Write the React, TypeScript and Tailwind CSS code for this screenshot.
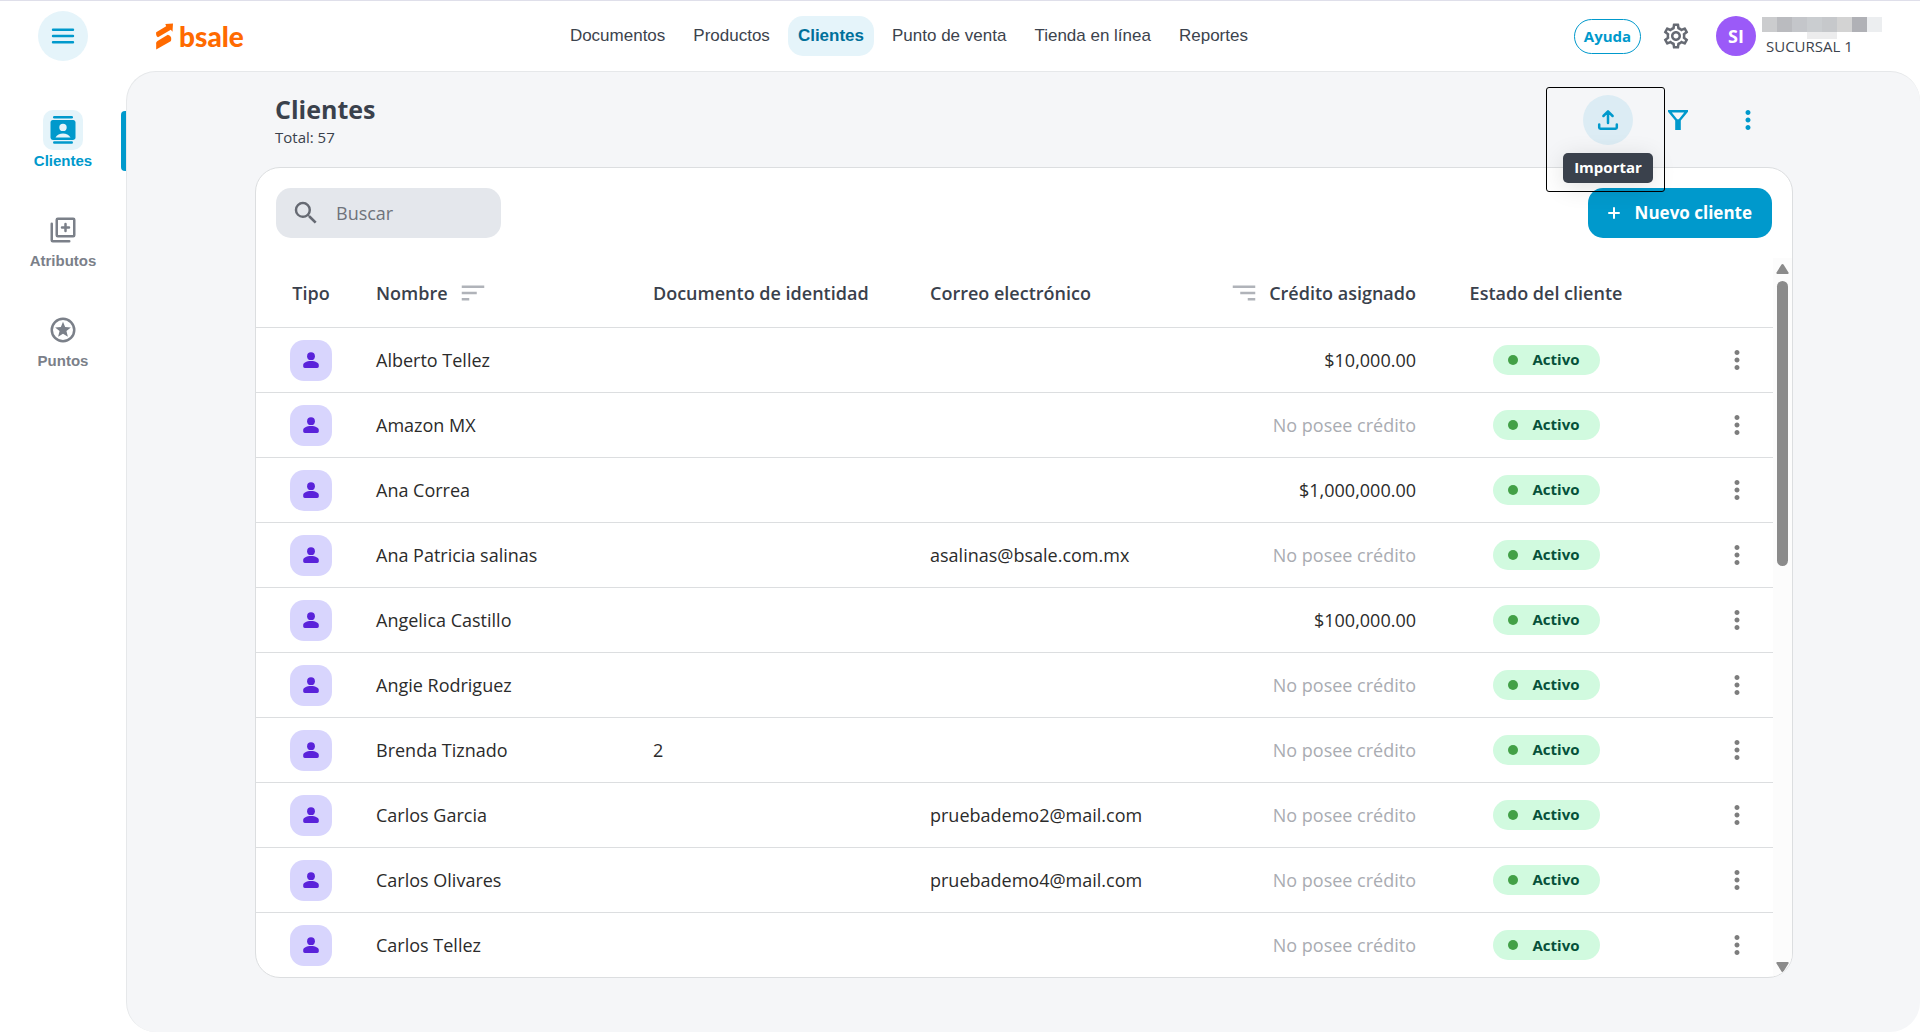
import React from 'react';
import { MdMoreVert, MdOutlineSettings, MdSearch, MdSort } from 'react-icons/md';

const navLinks = ['Documentos', 'Productos', 'Clientes', 'Punto de venta', 'Tienda en línea', 'Reportes'];

const clients = [
  { name: 'Alberto Tellez', document: '', email: '', credit: '$10,000.00' },
  { name: 'Amazon MX', document: '', email: '', credit: '' },
  { name: 'Ana Correa', document: '', email: '', credit: '$1,000,000.00' },
  { name: 'Ana Patricia salinas', document: '', email: 'asalinas@bsale.com.mx', credit: '' },
  { name: 'Angelica Castillo', document: '', email: '', credit: '$100,000.00' },
  { name: 'Angie Rodriguez', document: '', email: '', credit: '' },
  { name: 'Brenda Tiznado', document: '2', email: '', credit: '' },
  { name: 'Carlos Garcia', document: '', email: 'pruebademo2@mail.com', credit: '' },
  { name: 'Carlos Olivares', document: '', email: 'pruebademo4@mail.com', credit: '' },
  { name: 'Carlos Tellez', document: '', email: '', credit: '' },
];

const MenuIcon = () => (
  <svg width="24" height="18" viewBox="0 0 24 18" stroke="currentColor" strokeWidth="2.4" strokeLinecap="round">
    <path d="M2 2.7h20M2 9h20M2 15.3h20" />
  </svg>
);

const ContactsIcon = () => (
  <svg width="26" height="28" viewBox="0 0 26 28" fill="currentColor">
    <rect x="3" y="0" width="20" height="2.6" rx="1.3" />
    <path
      fillRule="evenodd"
      d="M2.8 3.9h20.4c1.3 0 2.3 1 2.3 2.3v15.4c0 1.3-1 2.3-2.3 2.3H2.8a2.3 2.3 0 0 1-2.3-2.3V6.2c0-1.3 1-2.3 2.3-2.3zM13 7.7a3.7 3.7 0 1 0 0 7.4 3.7 3.7 0 0 0 0-7.4zM5.5 21.5h15c-1.5-2.5-4.3-3.9-7.5-3.9s-6 1.4-7.5 3.9z"
    />
    <rect x="3" y="25.2" width="20" height="2.6" rx="1.3" />
  </svg>
);

const LibraryIcon = () => (
  <svg width="30" height="30" viewBox="0 0 24 24" fill="none" stroke="currentColor" strokeWidth="2" strokeLinecap="round" strokeLinejoin="round">
    <rect x="7" y="3" width="14" height="14" rx="0.8" />
    <path d="M3 7v13.2c0 .5.3.8.8.8H17M14 7.2v5.6M11.2 10h5.6" />
  </svg>
);

const PointsIcon = () => (
  <svg width="30" height="30" viewBox="0 0 24 24" fill="none">
    <circle cx="12" cy="12" r="9" stroke="currentColor" strokeWidth="2" />
    <path fill="currentColor" d="m12 5.3 1.7 4.3 4.6.3-3.55 2.9 1.15 4.6L12 14.9l-3.9 2.5 1.15-4.6L5.7 9.9l4.6-.3z" />
  </svg>
);

const UploadIcon = () => (
  <svg width="22" height="22" viewBox="0 0 22 22" fill="none" stroke="currentColor" strokeWidth="2.5" strokeLinecap="round" strokeLinejoin="round">
    <path d="M11 14V3M6.4 7 11 2.4 15.6 7M2.2 15.5v3.1c0 .7.5 1.2 1.2 1.2h15.2c.7 0 1.2-.5 1.2-1.2v-3.1" />
  </svg>
);

const FilterIcon = () => (
  <svg width="20" height="20" viewBox="0 0 20 20" fill="currentColor">
    <path fillRule="evenodd" d="M0 0h20v1.8L12.8 10.6V20H7.2v-9.4L0 1.8zM3.8 2.5 9.2 9.3h1.6l5.4-6.8z" />
  </svg>
);

const PersonIcon = () => (
  <svg width="24" height="24" viewBox="0 0 24 24" fill="currentColor">
    <circle cx="12" cy="8.2" r="3.9" />
    <path d="M4.2 18.3V17c0-1.2.7-2 1.8-2.6 1.8-.9 3.9-1.4 6-1.4s4.2.5 6 1.4c1.1.6 1.8 1.4 1.8 2.6v1.3c0 .9-.7 1.6-1.6 1.6H5.8c-.9 0-1.6-.7-1.6-1.6z" />
  </svg>
);

const Logo = () => (
  <a href="#" className="flex items-center gap-1 text-[#ff6a00]">
    <svg width="20" height="27" viewBox="0 0 60 80" fill="currentColor">
      <path d="M31 2.5 54 1l-1.5 25-5-6.5L9 42.5C4 40 2.5 34.5 3.5 27.5L33.5 9z" />
      <path d="M3.5 79V60c0-3 1.5-5 4-6.5L38.5 35c4 1 9 4.5 10 9v5.5c0 3-1.5 5-4 6.5z" />
    </svg>
    <span className="font-[Lato,sans-serif] text-[28px] leading-8 font-black">bsale</span>
  </a>
);

const Header = () => (
  <header className="flex h-[71px] items-center border-t border-[#dfdfea] pr-[38px]">
    <div className="flex w-[126px] shrink-0 justify-center">
      <button aria-label="Menú" className="flex size-[50px] items-center justify-center rounded-full bg-[#e5f4fa] text-[#0099cc]">
        <MenuIcon />
      </button>
    </div>
    <div className="flex flex-1 items-center justify-between pl-[29px]">
      <Logo />
      <nav className="flex gap-2 font-['Liberation_Sans',Arial,sans-serif] text-[17px] text-[#3c434d]">
        {navLinks.map((link) => (
          <a
            key={link}
            href="#"
            className={
              link === 'Clientes'
                ? 'flex h-10 items-center rounded-[15px] bg-[#e5f4fa] px-[10px] font-bold text-[#00709a]'
                : 'flex h-10 items-center px-[10px]'
            }
          >
            {link}
          </a>
        ))}
      </nav>
      <div className="flex items-center">
        <button className="h-[35px] w-[67px] rounded-full border border-[#0099cc] text-[15px] font-bold text-[#0099cc]">Ayuda</button>
        <button aria-label="Configuración" className="ml-5 text-[#666a73]">
          <MdOutlineSettings size={30} />
        </button>
        <div className="ml-[25px] flex size-10 items-center justify-center rounded-full bg-[#9b5af8] text-lg font-bold text-white">SI</div>
        <div className="ml-[6px]">
          {/* Redacted user name */}
          <div className="relative flex h-[15px]">
            <span className="w-[15px] bg-[#cbccce]" />
            <span className="w-[15px] bg-[#babbbf]" />
            <span className="w-[15px] bg-[#c4c6ca]" />
            <span className="w-[15px] bg-[#cacdd0]" />
            <span className="w-[15px] bg-[#c6c8cb]" />
            <span className="w-[15px] bg-[#d3d3d3]" />
            <span className="w-[15px] bg-[#b0b1b6]" />
            <span className="w-[15px] bg-[#eceef0]" />
            <span className="absolute top-[15px] left-[45px] h-[7px] w-[30px] bg-[#ececed]" />
          </div>
          <p className="relative mt-1 pl-1 text-[15px] leading-5 text-[#3c434d]">SUCURSAL 1</p>
        </div>
      </div>
    </div>
  </header>
);

const Sidebar = () => (
  <aside className="w-[126px] shrink-0 pt-[39px] font-['Liberation_Sans',Arial,sans-serif] text-[15px] leading-5 font-bold">
    <nav className="flex flex-col gap-[39px] text-[#7b8089]">
      <a href="#" className="relative flex flex-col items-center gap-px text-[#0099cc]">
        <span className="flex size-10 items-center justify-center rounded-[10px] bg-[#e5f4fa]">
          <ContactsIcon />
        </span>
        Clientes
        <span className="absolute top-px right-0 h-[60px] w-[5px] rounded-l bg-[#0099cc]" />
      </a>
      <a href="#" className="flex flex-col items-center gap-px">
        <span className="flex size-10 items-center justify-center">
          <LibraryIcon />
        </span>
        Atributos
      </a>
      <a href="#" className="flex flex-col items-center gap-px">
        <span className="flex size-10 items-center justify-center">
          <PointsIcon />
        </span>
        Puntos
      </a>
    </nav>
  </aside>
);

const ClientsTable = () => (
  <table className="w-full table-fixed border-collapse text-left text-lg text-[#2b2b2b]">
    <colgroup>
      <col className="w-[110px]" />
      <col />
      <col />
      <col />
      <col className="w-[229px]" />
      <col className="w-[240px]" />
      <col className="w-[107px]" />
    </colgroup>
    <thead>
      <tr className="h-[69px] border-b border-[#dcdee0] text-[#3a414c]">
        <th className="pt-[2px] text-center font-semibold">Tipo</th>
        <th className="px-[10px] pt-[2px] font-semibold">
          <div className="flex items-center gap-[10px]">
            Nombre
            <button aria-label="Ordenar por nombre" className="text-[#b0b3b9]">
              <MdSort size={30} />
            </button>
          </div>
        </th>
        <th className="px-[10px] pt-[2px] font-semibold">Documento de identidad</th>
        <th className="px-[10px] pt-[2px] font-semibold">Correo electrónico</th>
        <th className="px-[10px] pt-[2px] font-semibold whitespace-nowrap">
          <div className="flex items-center justify-end gap-[10px]">
            <button aria-label="Ordenar por crédito" className="text-[#b0b3b9]">
              <MdSort size={30} className="-scale-x-100" />
            </button>
            Crédito asignado
          </div>
        </th>
        <th className="pt-[2px] text-center font-semibold">Estado del cliente</th>
        <th aria-label="Acciones" />
      </tr>
    </thead>
    <tbody>
      {clients.map((client) => (
        <tr key={client.name} className="h-[65px] border-b border-[#dcdee0] last:border-b-0">
          <td className="pt-px">
            <div className="mx-auto flex h-[41px] w-[42px] items-center justify-center rounded-[14px] bg-[#d8d5fd] text-[#5a23da]">
              <PersonIcon />
            </div>
          </td>
          <td className="px-[10px]">{client.name}</td>
          <td className="px-[10px]">{client.document}</td>
          <td className="px-[10px]">{client.email}</td>
          <td className={client.credit ? 'px-[10px] text-right' : 'px-[10px] text-right text-[#a9acb2]'}>
            {client.credit || 'No posee crédito'}
          </td>
          <td className="pt-px">
            <div className="mx-auto flex h-[30px] w-[107px] items-center gap-[15px] rounded-full bg-[#d1fadf] pl-[15px] text-[15px] font-bold text-[#05513a]">
              <span className="size-[10px] rounded-full bg-[#43a047]" />
              Activo
            </div>
          </td>
          <td>
            <button aria-label={`Opciones de ${client.name}`} className="mr-[21px] ml-auto block text-[#7d7d7d]">
              <MdMoreVert size={30} />
            </button>
          </td>
        </tr>
      ))}
    </tbody>
  </table>
);

const Scrollbar = () => (
  <div className="flex w-[19px] shrink-0 flex-col items-center bg-[#fcfcfc] pt-[6px] pb-[5px]">
    <svg width="13" height="10" viewBox="0 0 13 10" fill="#8b8b8b">
      <path d="M6.5 0c.4 0 .7.2 1 .6l5 7.8c.4.7.1 1.6-.7 1.6H1.2C.4 10 .1 9.1.5 8.4l5-7.8c.3-.4.6-.6 1-.6z" />
    </svg>
    <div className="mt-[7px] h-[285px] w-[11px] rounded-full bg-[#8b8b8b]" />
    <svg width="13" height="10" viewBox="0 0 13 10" fill="#8b8b8b" className="mt-auto">
      <path d="M6.5 10c.4 0 .7-.2 1-.6l5-7.8c.4-.7.1-1.6-.7-1.6H1.2C.4 0 .1.9.5 1.6l5 7.8c.3.4.6.6 1 .6z" />
    </svg>
  </div>
);

const App = () => {
  return (
    <div className="flex min-h-screen flex-col bg-white font-['Open_Sans',sans-serif]">
      <Header />
      <div className="flex flex-1">
        <Sidebar />
        <main className="min-w-0 flex-1 rounded-[30px] border border-r-0 border-b-0 border-[#e6e8ea] bg-[#f5f6f8] pr-[127px] pb-[54px] pl-32">
          <div className="flex h-[95px] items-center justify-between px-5">
            <div className="pt-[2px] text-[#3a414c]">
              <h1 className="text-[25px] leading-8 font-bold">Clientes</h1>
              <p className="text-[15px] leading-6">Total: 57</p>
            </div>
            <div className="flex gap-5 text-[#0099cc]">
              <div className="relative">
                <button aria-label="Importar" aria-describedby="import-tip" className="flex size-[50px] items-center justify-center rounded-full bg-[#dcecf4]">
                  <UploadIcon />
                </button>
                <div
                  id="import-tip"
                  role="tooltip"
                  className="absolute top-[58px] left-1/2 flex h-[30px] w-[90px] -translate-x-1/2 items-center justify-center rounded-[5px] bg-[#3a414c] text-[15px] font-bold text-white shadow-[0_4px_24px_rgba(0,0,0,0.12)]"
                >
                  Importar
                </div>
                {/* Focus frame around the button and its tooltip */}
                <div className="pointer-events-none absolute -top-2 -left-[37px] z-10 h-[105px] w-[119px] rounded-[3px] border border-black" />
              </div>
              <button aria-label="Filtrar" className="flex size-[50px] items-center justify-center">
                <FilterIcon />
              </button>
              <button aria-label="Más opciones" className="flex size-[50px] items-center justify-center">
                <MdMoreVert size={30} />
              </button>
            </div>
          </div>

          <section className="overflow-hidden rounded-[25px] border border-[#dcdee0] bg-white">
            <div className="flex items-center justify-between p-5">
              <label className="flex h-[50px] w-[225px] items-center gap-[15px] rounded-[15px] bg-[#e4e7ec] px-[15px] text-[#666a73]">
                <MdSearch size={30} className="shrink-0" />
                <input
                  type="search"
                  aria-label="Buscar"
                  placeholder="Buscar"
                  className="w-full min-w-0 bg-transparent text-lg outline-none placeholder:text-[#6f737b]"
                />
              </label>
              <button className="flex h-[50px] items-center gap-[15px] rounded-[15px] bg-[#0099cc] px-5 text-[17px] font-bold text-white">
                <svg width="12" height="12" viewBox="0 0 12 12" stroke="currentColor" strokeWidth="2" strokeLinecap="round">
                  <path d="M6 1v10M1 6h10" />
                </svg>
                Nuevo cliente
              </button>
            </div>
            <div className="flex">
              <ClientsTable />
              <Scrollbar />
            </div>
          </section>
        </main>
      </div>
    </div>
  );
};

export default App;
